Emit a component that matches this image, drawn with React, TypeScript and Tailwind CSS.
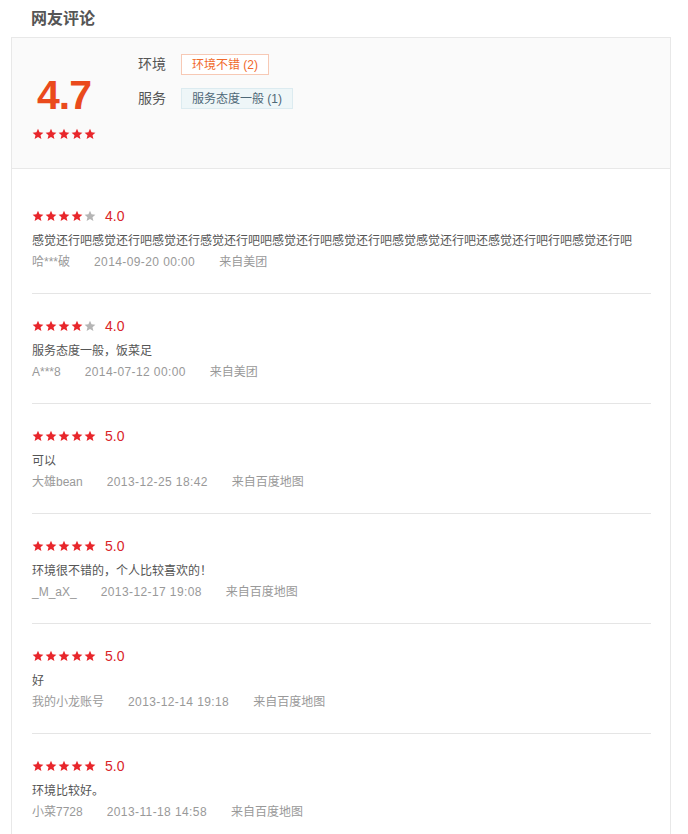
import React from 'react';

type Review = {
  score: number;
  text: string;
  user: string;
  time: string;
  from: string;
};

const reviews: Review[] = [
  {
    score: 4,
    text: '感觉还行吧感觉还行吧感觉还行感觉还行吧吧感觉还行吧感觉还行吧感觉感觉还行吧还感觉还行吧行吧感觉还行吧',
    user: '哈***破',
    time: '2014-09-20 00:00',
    from: '来自美团',
  },
  { score: 4, text: '服务态度一般，饭菜足', user: 'A***8', time: '2014-07-12 00:00', from: '来自美团' },
  { score: 5, text: '可以', user: '大雄bean', time: '2013-12-25 18:42', from: '来自百度地图' },
  { score: 5, text: '环境很不错的，个人比较喜欢的！', user: '_M_aX_', time: '2013-12-17 19:08', from: '来自百度地图' },
  { score: 5, text: '好', user: '我的小龙账号', time: '2013-12-14 19:18', from: '来自百度地图' },
  { score: 5, text: '环境比较好。', user: '小菜7728', time: '2013-11-18 14:58', from: '来自百度地图' },
];

function Star({ on }: { on: boolean }) {
  return (
    <svg width="12" height="12" viewBox="0 0 24 24" className={on ? 'text-[#e8262b]' : 'text-[#b5b5b5]'}>
      <path
        fill="currentColor"
        d="M12 1.5l3.1 7.1 7.7.7-5.8 5.1 1.8 7.6L12 18l-6.8 4 1.8-7.6-5.8-5.1 7.7-.7z"
      />
    </svg>
  );
}

function Stars({ count }: { count: number }) {
  return (
    <div className="flex gap-[1px]">
      {[0, 1, 2, 3, 4].map((i) => (
        <Star key={i} on={i < count} />
      ))}
    </div>
  );
}

export default function App() {
  return (
    <div className="w-[688px] bg-white font-['Liberation_Sans','Noto_Sans_CJK_SC',sans-serif] text-[12px]">
      <div className="h-[37px] pl-[31px] flex items-center">
        <h2 className="text-[16px] font-bold text-[#555] leading-none">网友评论</h2>
      </div>

      <div className="ml-[11px] w-[660px] border border-[#e8e8e8] border-b-0">
        {/* summary */}
        <div className="flex bg-[#fafafa] border-b border-[#e8e8e8] pl-[20px] h-[131px]">
          <div className="w-[64px] flex flex-col items-center pt-[35px]">
            <div className="text-[41px] leading-[44px] font-bold text-[#ea4a1c] tracking-[-1px]">4.7</div>
            <div className="mt-[11px]">
              <Stars count={5} />
            </div>
          </div>
          <div className="ml-[42px] pt-[16px] flex flex-col gap-[13px]">
            <div className="flex items-center">
              <span className="w-[28px] text-[14px] text-[#555]">环境</span>
              <span className="ml-[15px] h-[21px] px-[10px] flex items-center border border-[#f7c9b5] bg-white text-[#f0692a]">
                环境不错 (2)
              </span>
            </div>
            <div className="flex items-center">
              <span className="w-[28px] text-[14px] text-[#555]">服务</span>
              <span className="ml-[15px] h-[21px] px-[10px] flex items-center border border-[#dcebf0] bg-[#eef6f8] text-[#4e6877]">
                服务态度一般 (1)
              </span>
            </div>
          </div>
        </div>

        {/* list */}
        <div className="pt-[15px] pl-[20px] pr-[19px]">
          {reviews.map((r, i) => (
            <div key={i} className="pt-[22px] pb-[20px] border-b border-[#e5e5e5]">
              <div className="h-[20px] flex items-center">
                <Stars count={r.score} />
                <span className="ml-[9px] text-[14px] text-[#d9252a]">{r.score.toFixed(1)}</span>
              </div>
              <div className="mt-[5px] h-[20px] leading-[20px] text-[#555] whitespace-nowrap">{r.text}</div>
              <div className="h-[22px] leading-[22px] text-[#999] flex">
                <span className="mr-[24px]">{r.user}</span>
                <span className="mr-[24px] tracking-[0.4px]">{r.time}</span>
                <span>{r.from}</span>
              </div>
            </div>
          ))}
        </div>
      </div>
    </div>
  );
}
